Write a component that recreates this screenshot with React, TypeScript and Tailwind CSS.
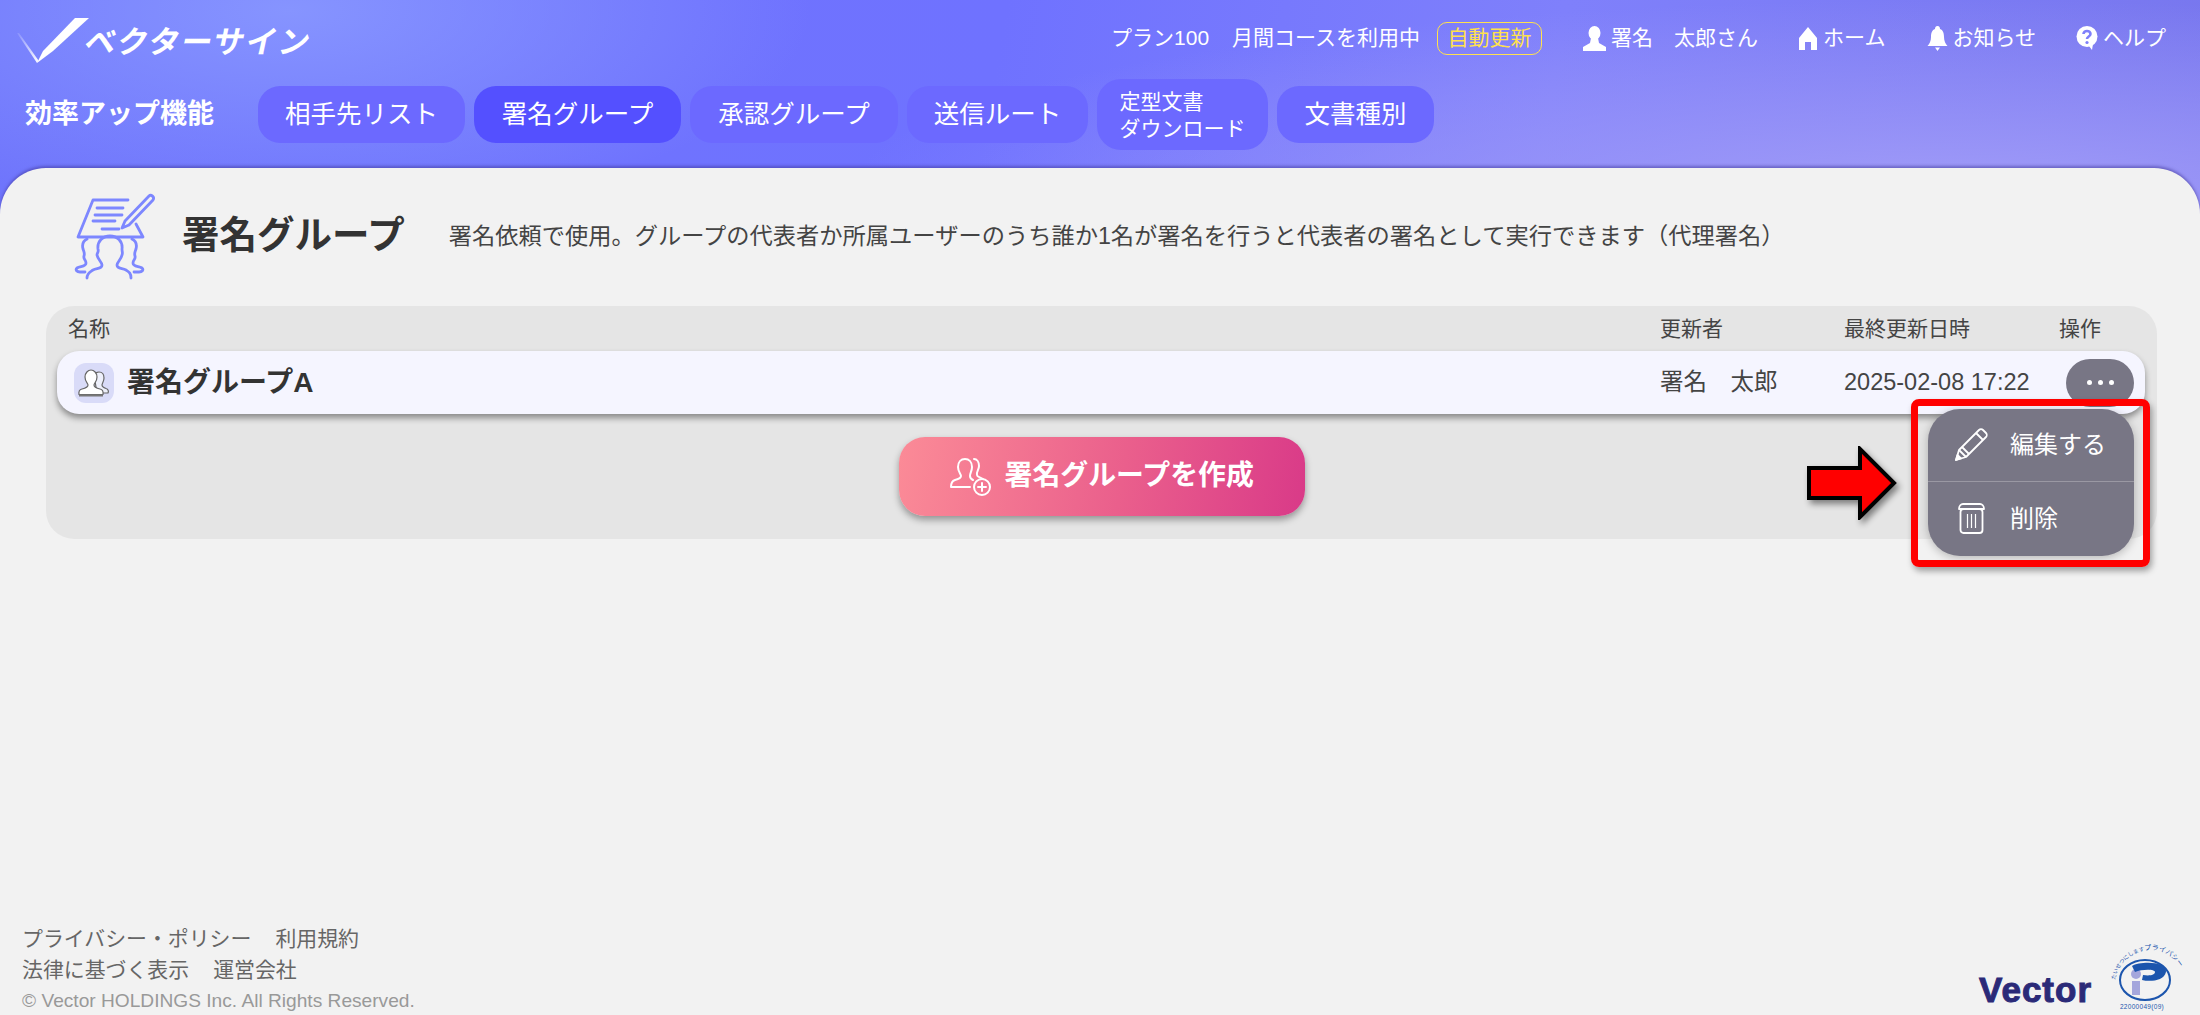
import React from "react";

const tabs = [
    { label: "相手先リスト", width: "w-[207px]" },
    { label: "署名グループ", width: "w-[207px]" },
    { label: "承認グループ", width: "w-[208px]" },
    { label: "送信ルート", width: "w-[181px]" },
    { label: "定型文書ダウンロード", width: "w-[171px]" },
    { label: "文書種別", width: "w-[157px]" },
];

function LogoMark() {
    return (
        <svg viewBox="0 0 85 64" className="w-[85px] h-[64px] shrink-0 overflow-visible">
            <defs>
                <linearGradient id="tail" x1="0" y1="0" x2="1" y2="1">
                    <stop offset="0" stopColor="#ffffff" stopOpacity="0.1" />
                    <stop offset="1" stopColor="#ffffff" />
                </linearGradient>
            </defs>
            <polygon points="17,27 37,57 38.5,54.5 19,27" fill="url(#tail)" />
            <polygon points="75,12 89,12 53,45 37,57 43,45" fill="#ffffff" />
        </svg>
    );
}

function UserIcon() {
    return (
        <svg viewBox="0 0 25 25" className="w-[25px] h-[25px] fill-white">
            <ellipse cx="12.5" cy="7" rx="6" ry="7" />
            <path d="M9 12h7l1 5 7 4v4H1v-4l7-4z" />
        </svg>
    );
}

function HomeIcon() {
    return (
        <svg viewBox="0 0 18 23" className="w-[18px] h-[23px] fill-white">
            <path d="M9 0l9 11v12h-6v-8H6v8H0V11z" />
        </svg>
    );
}

function BellIcon() {
    return (
        <svg viewBox="0 0 21 25" className="w-[21px] h-[25px] fill-white">
            <path d="M10.5 0c2 0 2.500 1.500 2.500 3 3 1 4 4 4 8 0 4 1.500 7 3.500 9H.5c2-2 3.500-5 3.500-9 0-4 1-7 4-8 0-1.500.5-3 2.500-3z" />
            <path d="M8 21.500h5L10.500 25z" />
        </svg>
    );
}

function HelpIcon() {
    return (
        <svg viewBox="0 0 22 24" className="w-[22px] h-[24px]">
            <circle cx="11" cy="10.500" r="10.500" fill="#ffffff" />
            <path d="M13 20l3 4 1-6z" fill="#ffffff" />
            <path d="M7.500 8c0-2 1.500-3 3.500-3s3.500 1 3.500 3c0 2.500-3.500 2.500-3.500 5" fill="none" stroke="#7f80fb" strokeWidth="2.600" />
            <circle cx="11" cy="16.500" r="1.600" fill="#7f80fb" />
        </svg>
    );
}

function GroupSignIcon() {
    return (
        <svg viewBox="0 0 84 90" className="w-[84px] h-[90px] shrink-0" fill="none" stroke="#7d87ff" strokeWidth="2.800" strokeLinecap="round" strokeLinejoin="round">
            <path d="M55 9H20L5 46h65l-7-13" />
            <path d="M24 17h26M22 24h27M20 30h22M29 38h17" />
            <path d="M76 5L52 30l-3 7 7-3L80 9c2-3-2-6-4-4z" />
            <path d="M14 87c0-5 3-6 6-8 4-2 9-1 9-5 0-3-4-5-5-10 0-2 2-3 1-6-1-8 5-13 12-13s13 5 12 13c0 3 1 4 0 6-1 5-5 7-5 10 0 4 5 3 9 5 3 2 5 3 5 8" />
            <path d="M14 48c-4 2-5 6-4 10 1 3 2 4 1 7-1 3 2 4 2 7 0 4-6 3-9 5-2 2 0 4 3 4h5" />
            <path d="M59 48c4 2 5 6 4 10-1 3-2 4-1 7 1 3-2 4-2 7 0 4 6 3 9 5 2 2 0 4-3 4h-5" />
        </svg>
    );
}

function UsersTileIcon() {
    return (
        <svg viewBox="0 0 40 40" className="w-[40px] h-[40px]">
            <path d="M23 30h11c1-2 0-4-2-4.500-3-1-4-2-4-3.500 0-2 2-3 2-7s-2-6-5-6-4 1-5 3z" fill="#eef0fb" stroke="#666" strokeWidth="1.200" />
            <path d="M5 31.500c-.5-3 1-5 3-5.500 4-1 6-2 6-4 0-2-3-3-3-8 0-4 3-7 6-7s6 3 6 7c0 5-3 6-3 8 0 2 2 3 6 4 2 .5 3.500 2.500 3 5.500z" fill="#ffffff" stroke="#666" strokeWidth="1.200" />
            <path d="M5 32.500h24" stroke="#777" strokeWidth="2" />
        </svg>
    );
}

function AddGroupIcon() {
    return (
        <svg viewBox="0 0 41 39" className="w-[41px] h-[39px] shrink-0" fill="none" stroke="#ffffff" strokeWidth="2" strokeLinecap="round" strokeLinejoin="round">
            <path d="M20 30H1c0-4 1-6 4-7 4-1 6-2 6-4s-3-4-3-9c0-5 3-8 7-8s7 3 7 8c0 4-2 6-2 9 0 2 1 3 3 4" />
            <path d="M24 2c3 0 5 3 5 7 0 4-3 6-2 9 0 2 3 2 6 4" />
            <circle cx="32" cy="30" r="8" />
            <path d="M32 26v8M28 30h8" />
        </svg>
    );
}

function PencilIcon() {
    return (
        <svg viewBox="0 0 33 33" className="w-[33px] h-[33px]" fill="none" stroke="#ffffff" strokeWidth="1.800" strokeLinejoin="round">
            <path d="M1 32l3-10L24 2c1-1 3-1 4 0l3 3c1 1 1 3 0 4L11 29z" />
            <path d="M4 22l7 7M7 19l7 7M21 5l7 7" />
            <path d="M1 32l1.500-5 3.500 3.500z" fill="#ffffff" />
        </svg>
    );
}

function TrashIcon() {
    return (
        <svg viewBox="0 0 27 31" className="w-[27px] h-[31px]" fill="none" stroke="#ffffff" strokeWidth="1.800" strokeLinejoin="round">
            <path d="M1 6c0-3 2-5 4-5h17c2 0 4 2 4 5z" />
            <rect x="2.500" y="6" width="22" height="24" rx="3" />
            <path d="M9.500 11v14M13.500 11v14M17.500 11v14" strokeWidth="1.200" />
        </svg>
    );
}

function ArrowMark() {
    return (
        <svg viewBox="0 0 90 74" className="w-[90px] h-[74px] drop-shadow-[3px_4px_3px_rgba(0,0,0,0.45)]">
            <polygon points="2,22 53,22 53,3 87,37 53,71 53,52 2,52" fill="#ff0000" stroke="#000000" strokeWidth="4" />
        </svg>
    );
}

function PrivacyMark() {
    return (
        <svg viewBox="0 0 68 66" className="w-[68px] h-[66px] overflow-visible">
            <defs>
                <path id="arc" d="M3 33C7 13 24 3 40 3 50 3 60 8 68 21" />
            </defs>
            <text fontSize="5.500" fill="#1c55ad" fontFamily="'Noto Sans CJK JP',sans-serif">
                <textPath href="#arc">たいせつにします<tspan fontSize="7">プライバシー</tspan></textPath>
            </text>
            <ellipse cx="33" cy="33" rx="25" ry="20" fill="none" stroke="#1c55ad" strokeWidth="2" />
            <circle cx="24" cy="27" r="5" fill="#a4a6dc" />
            <path d="M20 34h8v14h-8z" fill="#a4a6dc" />
            <path d="M20 19c8-5 36-5 34 6-2 9-16 10-24 8l1-5c7 1 12 0 12-3s-13-3-20 0z" fill="#1c55ad" />
            <text x="30" y="62" textAnchor="middle" fontSize="6.500" fill="#1c55ad" fontFamily="'Liberation Sans',sans-serif" letterSpacing="0.300">22000049(09)</text>
        </svg>
    );
}

export default function App() {
    return (
        <div className="h-[1015px] flex flex-col overflow-hidden bg-[#f2f2f2] font-['Liberation_Sans','Noto_Sans_CJK_JP',sans-serif]">
            <header className="h-[216px] shrink-0 text-white bg-[radial-gradient(ellipse_520px_210px_at_290px_10px,#8694ff,transparent),radial-gradient(ellipse_1100px_190px_at_1950px_190px,#a09bf8,transparent),linear-gradient(100deg,#6f75fc_0%,#6f72ff_45%,#7f80fb_70%,#7877ee_100%)]">
                <div className="h-[76px] flex items-center justify-between pr-[34px]">
                    <div className="flex items-center">
                        <LogoMark />
                        <span className="text-[31px] leading-none font-bold tracking-[1.600px] -skew-x-12 mt-[8px]">ベクターサイン</span>
                    </div>
                    <div className="flex items-center text-[21px]">
                        <span>プラン100</span>
                        <span className="ml-[23px]">月間コースを利用中</span>
                        <span className="ml-[17px] h-[33px] w-[105px] flex items-center justify-center rounded-[10px] border border-[#ffe14d] text-[#ffe14d]">自動更新</span>
                        <span className="ml-[40px] flex items-center gap-[4px]"><UserIcon />署名　太郎さん</span>
                        <span className="ml-[41px] flex items-center gap-[6px]"><HomeIcon />ホーム</span>
                        <span className="ml-[42px] flex items-center gap-[4px]"><BellIcon />お知らせ</span>
                        <span className="ml-[40px] flex items-center gap-[5px]"><HelpIcon />ヘルプ</span>
                    </div>
                </div>
                <nav className="h-[77px] flex items-center pl-[25px]">
                    <span className="w-[233px] text-[27px] font-bold">効率アップ機能</span>
                    <div className="flex items-center gap-[9px]">
                        {tabs.map((tab, i) => (
                            <div
                                key={tab.label}
                                className={`${tab.width} ${i === 4 ? "h-[71px] rounded-[24px] text-[21px] leading-[27px]" : "h-[57px] rounded-[22px] text-[25.500px]"} ${i === 1 ? "bg-[#5450ff]" : "bg-[#6c69ff]"} flex items-center justify-center`}
                            >
                                {i === 4 ? <span>定型文書<br />ダウンロード</span> : tab.label}
                            </div>
                        ))}
                    </div>
                </nav>
            </header>

            <main className="-mt-[48px] flex-1 flex flex-col rounded-t-[46px] bg-[#f2f2f2] shadow-[0_-2px_3px_rgba(60,50,150,0.5)] relative">
                <div className="h-[136px] mb-[2px] pl-[73px] flex items-center">
                    <GroupSignIcon />
                    <h1 className="ml-[25px] text-[37.500px] font-bold text-[#333] leading-none">署名グループ</h1>
                    <p className="ml-[44px] text-[23.250px] text-[#444]">署名依頼で使用。グループの代表者か所属ユーザーのうち誰か1名が署名を行うと代表者の署名として実行できます（代理署名）</p>
                </div>

                <section className="ml-[46px] mr-[43px] h-[233px] rounded-[28px] bg-[#e5e5e5] flex flex-col">
                    <div className="h-[45px] shrink-0 pl-[22px] flex items-center text-[21px] text-[#444]">
                        <span className="flex-1">名称</span>
                        <span className="w-[184px]">更新者</span>
                        <span className="w-[215px]">最終更新日時</span>
                        <span className="w-[98px]">操作</span>
                    </div>
                    <div className="h-[63px] shrink-0 ml-[11px] mr-[12px] pl-[17px] pr-[11px] flex items-center rounded-[22px] bg-[#f5f5ff] shadow-[0_4px_6px_rgba(0,0,0,0.4)]">
                        <div className="w-[40px] h-[40px] rounded-[12px] bg-[#d9dbf8] shrink-0"><UsersTileIcon /></div>
                        <span className="ml-[13px] flex-1 text-[28px] font-bold text-[#333]">署名グループA</span>
                        <span className="w-[184px] text-[23.500px] text-[#444]">署名　太郎</span>
                        <span className="w-[222px] text-[23.500px] text-[#444]">2025-02-08 17:22</span>
                        <div className="relative w-[68px] h-[48px] shrink-0">
                            <button className="w-full h-full rounded-full bg-[#787685] flex items-center justify-center gap-[6px]">
                                <i className="w-[5px] h-[5px] rounded-full bg-white" />
                                <i className="w-[5px] h-[5px] rounded-full bg-white" />
                                <i className="w-[5px] h-[5px] rounded-full bg-white" />
                            </button>
                            <div className="absolute z-10 top-[50px] left-[-138px] w-[206px] h-[147px] rounded-[32px] bg-[#787685] text-white text-[24px] flex flex-col shadow-[0_2px_10px_rgba(0,0,0,0.25)]">
                                <div className="h-[73px] pl-[27px] flex items-center gap-[22px] border-b border-white/25"><PencilIcon />編集する</div>
                                <div className="flex-1 pl-[30px] flex items-center gap-[25px]"><TrashIcon />削除</div>
                            </div>
                            <div className="absolute z-20 top-[40px] left-[-155px] w-[239px] h-[168px] rounded-[8px] border-[7px] border-[#ff0000] shadow-[2px_4px_6px_rgba(0,0,0,0.35)]" />
                            <div className="absolute z-20 top-[87px] left-[-259px]"><ArrowMark /></div>
                        </div>
                    </div>
                    <div className="mt-[23px] flex justify-center">
                        <button className="w-[406px] h-[79px] rounded-[26px] flex items-center pl-[51px] gap-[14px] text-white text-[27.900px] font-bold bg-[linear-gradient(100deg,#fb8b97_0%,#ea5f8c_55%,#d93a88_100%)] shadow-[0_4px_7px_rgba(0,0,0,0.35)]">
                            <AddGroupIcon /><span className="-mt-[2px]">署名グループを作成</span>
                        </button>
                    </div>
                </section>

                <div className="flex-1" />

                <footer className="pl-[22px] pr-[20px] pb-[2px] flex items-end justify-between">
                    <div className="text-[20.900px] text-[#666]">
                        <div className="leading-[32px]">プライバシー・ポリシー<span className="ml-[24px]">利用規約</span></div>
                        <div className="leading-[30px]">法律に基づく表示<span className="ml-[24px]">運営会社</span></div>
                        <div className="mt-[4px] text-[19.150px] leading-[24px] text-[#999]">© Vector HOLDINGS Inc. All Rights Reserved.</div>
                    </div>
                    <div className="flex items-end gap-[20px]">
                        <span className="text-[35px] leading-[36px] font-bold text-[#2b2a78] tracking-[1px] [-webkit-text-stroke:1px_#2b2a78] mb-[5px]">Vector</span>
                        <PrivacyMark />
                    </div>
                </footer>
            </main>
        </div>
    );
}
